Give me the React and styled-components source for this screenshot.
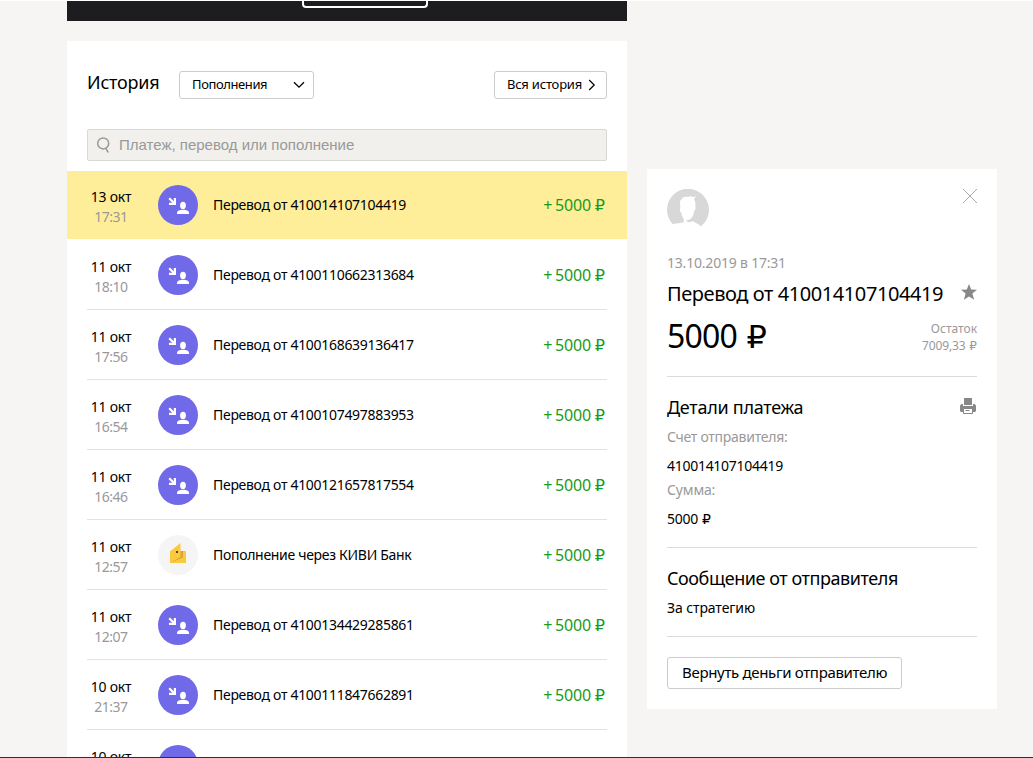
import React from 'react'
import styled, { createGlobalStyle } from 'styled-components'

//Styles
const GlobalStyle = createGlobalStyle`
  * {
    box-sizing: border-box;
  }
  body {
    margin: 0;
    background: #f6f5f3;
    color: #000;
    font-family: 'Noto Sans', 'Open Sans', sans-serif;
  }
  h1, h2, p {
    margin: 0;
    font-weight: 400;
  }
  svg {
    display: block;
    flex: none;
  }
`

const Page = styled.div`
  display: flex;
  flex-direction: column;
  height: 758px;
  overflow: hidden;
  border-top: 1px solid #fff;
  border-bottom: 1px solid #243240;
`

const Columns = styled.div`
  flex: 1;
  min-height: 0;
  display: flex;
  gap: 20px;
  padding-left: 67px;
`

const Main = styled.div`
  width: 560px;
`

const Banner = styled.div`
  display: flex;
  justify-content: center;
  height: 20px;
  margin-bottom: 20px;
  padding-left: 36px;
  background: #1d1d1f;
`

const BannerButton = styled.div`
  width: 126px;
  height: 7px;
  border: 2px solid #fff;
  border-top: 0;
  border-radius: 0 0 4px 4px;
`

const History = styled.section`
  height: 800px;
  padding-top: 30px;
  background: #fff;
`

const HistoryHeader = styled.div`
  display: flex;
  align-items: center;
  height: 28px;
  margin: 0 20px 30px;
`

const HistoryTitle = styled.h1`
  width: 92px;
  padding-bottom: 6px;
  font-size: 18px;
  line-height: 24px;
  letter-spacing: -0.2px;
  white-space: nowrap;
`

const Button = styled.button`
  display: flex;
  align-items: center;
  justify-content: space-between;
  width: ${props => props.$width}px;
  height: ${props => props.$height || 28}px;
  margin: 0;
  margin-left: ${props => (props.$right ? 'auto' : 0)};
  padding: 0 ${props => props.$end || 8}px 0 ${props => props.$start || 12}px;
  border: 1px solid #ccc;
  border-radius: 3px;
  background: #fff;
  color: #000;
  font-family: inherit;
  font-size: ${props => props.$size || 13}px;
  letter-spacing: ${props => props.$spacing || 0}px;
  white-space: nowrap;
`

const ButtonText = styled.span`
  padding-bottom: 2px;
`

const Search = styled.div`
  display: flex;
  align-items: center;
  height: 32px;
  margin: 0 20px 10px;
  padding: 0 0 1px 8px;
  gap: 7px;
  border: 1px solid #d9d8d4;
  border-radius: 2px;
  background: #f1f0ec;
  color: #999;
  font-family: 'Liberation Sans', Arial, sans-serif;
  font-size: 15px;
`

const Row = styled.div`
  display: flex;
  height: ${props => (props.$active ? 68 : 70)}px;
  margin: ${props => (props.$active ? '0 0 1px' : '0 20px')};
  padding: ${props => (props.$active ? '14px 20px 0' : '15px 0 0')};
  border-bottom: ${props => (props.$active ? 0 : '1px solid #e2e2e2')};
  background: ${props => (props.$active ? '#ffee99' : '#fff')};
`

const When = styled.div`
  width: 48px;
  margin: 2px 23px 0 0;
  font-size: 14px;
  line-height: 20px;
  letter-spacing: -0.2px;
  text-align: center;
`

const Time = styled.div`
  color: #999;
  letter-spacing: -0.5px;
`

const Name = styled.div`
  flex: 1;
  margin-left: 15px;
  font-size: 14px;
  line-height: 40px;
  letter-spacing: -0.3px;
`

const Amount = styled.div`
  margin-right: 2px;
  font-size: 16px;
  line-height: 40px;
  letter-spacing: -0.2px;
  word-spacing: -1px;
  color: #1a9a1a;
`

const Ruble = styled.span`
  margin-left: 0.06em;
  font-family: 'DejaVu Sans', sans-serif;
  font-size: 1em;
  line-height: 1;
  letter-spacing: 0;
`

const Details = styled.aside`
  width: 350px;
  height: 540px;
  margin-top: 168px;
  padding: 20px 20px 0;
  background: #fff;
`

const Line = styled.div`
  display: flex;
  justify-content: space-between;
  align-items: flex-start;
`

const Muted = styled.p`
  font-size: ${props => props.$size || 14}px;
  line-height: ${props => props.$line || 20}px;
  letter-spacing: ${props => props.$spacing || 0}px;
  text-align: ${props => props.$align || 'left'};
  color: #999;
`

const DateText = styled(Muted)`
  margin-top: 22px;
`

const Title = styled.h2`
  font-size: 20px;
  line-height: 30px;
  letter-spacing: -0.42px;
  margin-top: 6px;
  white-space: nowrap;
`

const Sum = styled.p`
  font-size: 32px;
  line-height: 40px;
  letter-spacing: -0.8px;
`

const Balance = styled.div`
  padding-top: 4px;
`

const SumLine = styled(Line)`
  height: 61px;
  margin-top: 7px;
  border-bottom: 1px solid #dcdcdc;
`

const Block = styled.div`
  height: ${props => props.$height}px;
  padding-top: 17px;
  border-bottom: 1px solid #dcdcdc;
`

const BlockTitle = styled.h2`
  height: 33px;
  font-size: 18px;
  line-height: 26px;
  letter-spacing: ${props => props.$spacing || -0.27}px;
`

const Value = styled.p`
  margin-top: ${props => props.$top || 0}px;
  font-size: 14px;
  line-height: 20px;
  letter-spacing: ${props => props.$spacing || -0.28}px;
`

const Footer = styled.div`
  padding-top: 20px;
`

const StarBox = styled.div`
  padding: 11px 0 0;
`

const PrinterBox = styled.div`
  padding: 4px 1px 0 0;
`

//Icons
const TransferIcon = () => (
  <svg width="40" height="40" viewBox="0 0 40 40">
    <circle cx="20" cy="20" r="20" fill="#7069e8" />
    <path d="M11.200 13.200l5 5" fill="none" stroke="#fff" strokeWidth="2.2" />
    <path d="M18 13v7h-7v-2.200h4.800v-4.800z" fill="#fff" />
    <ellipse cx="25" cy="20.400" rx="2.900" ry="3.700" fill="#fff" />
    <path d="M19 29v-1c0-2.200 2.600-3.300 6-3.300s6 1.100 6 3.300v1z" fill="#fff" />
  </svg>
)

const BankIcon = () => (
  <svg width="40" height="40" viewBox="0 0 40 40">
    <circle cx="20" cy="20" r="20" fill="#f5f5f5" />
    <path d="M12 28V16.500L22.500 8v8H28v12z" fill="#fbc93d" />
    <path d="M22.500 16H25v6.500L12 28l10.500-6z" fill="#d9a531" />
    <circle cx="19" cy="17" r="1.100" fill="#30240b" />
  </svg>
)

const SearchIcon = () => (
  <svg width="16" height="18" viewBox="0 0 16 18">
    <circle cx="7.2" cy="7.4" r="5.5" fill="none" stroke="#999" strokeWidth="1.5" />
    <path d="M9.600 12.200l2.700 4.300" fill="none" stroke="#999" strokeWidth="1.5" />
  </svg>
)

const DownIcon = () => (
  <svg width="12" height="8" viewBox="0 0 12 8">
    <path d="M1 1.2l5 5 5-5" fill="none" stroke="#000" strokeWidth="1.3" />
  </svg>
)

const RightIcon = () => (
  <svg width="8" height="12" viewBox="0 0 8 12">
    <path d="M1.2 1l5 5-5 5" fill="none" stroke="#000" strokeWidth="1.2" />
  </svg>
)

const Avatar = () => (
  <svg width="42" height="42" viewBox="0 0 42 42">
    <path
      d="M5.500 35A21 21 0 1 1 34 37.300c-3-2.800-6-3.300-8-5.300-2.500 1.500-5 1.500-7.500-.5l-1-.3c2 .5 4.500 0 6.500-1.700 2-2 2.800-4.500 3-7.500 1.500-.8 2-3 1.300-4.500.5-3-.2-5.500-1.300-7.200l2-3-4 1-1-1.500-2 1-5.500.2-2.500 3-1 1 .3 7c-1 1-.5 3.200 1 4.500.2 2.500 1 4.500 2.500 6.500l-.2 3.500z"
      fill="#d8d8d8"
    />
  </svg>
)

const CloseIcon = () => (
  <svg width="14" height="14" viewBox="0 0 14 14">
    <path d="M0 0l14 14M14 0L0 14" fill="none" stroke="#aaa" strokeWidth="1" />
  </svg>
)

const StarIcon = () => (
  <svg width="17" height="17" viewBox="0 0 17 17">
    <path d="M9 0l2.200 5.600 5.800.2-4.600 3.800 1.700 6.200L9 12.400l-5.100 3.400 1.700-6.200L1 5.800l5.800-.2z" fill="#888" />
  </svg>
)

const PrinterIcon = () => (
  <svg width="16" height="16" viewBox="0 0 16 16">
    <path d="M4 0h8v7H4zM1.500 6H3v2h10V6h1.500L16 7.500V13l-1 1h-2v-3H3v3H1l-1-1V7.500z" fill="#888" />
    <path d="M3.500 10.500h9v5h-9z" fill="#fff" stroke="#888" />
    <path d="M5.500 12.500h4" stroke="#888" />
  </svg>
)

const operations = [
  { date: '13 окт', time: '17:31', name: 'Перевод от 410014107104419', active: true },
  { date: '11 окт', time: '18:10', name: 'Перевод от 4100110662313684' },
  { date: '11 окт', time: '17:56', name: 'Перевод от 4100168639136417' },
  { date: '11 окт', time: '16:54', name: 'Перевод от 4100107497883953' },
  { date: '11 окт', time: '16:46', name: 'Перевод от 4100121657817554' },
  { date: '11 окт', time: '12:57', name: 'Пополнение через КИВИ Банк', bank: true },
  { date: '11 окт', time: '12:07', name: 'Перевод от 4100134429285861' },
  { date: '10 окт', time: '21:37', name: 'Перевод от 4100111847662891' },
  { date: '10 окт' }
]

const App = () => (
  <Page>
    <GlobalStyle />
    <Columns>
      <Main>
        <Banner>
          <BannerButton />
        </Banner>
        <History>
          <HistoryHeader>
            <HistoryTitle>История</HistoryTitle>
            <Button $width={135} $spacing={-0.4}>
              <ButtonText>Пополнения</ButtonText>
              <DownIcon />
            </Button>
            <Button $width={113} $right $end={10} $spacing={-0.2}>
              <ButtonText>Вся история</ButtonText>
              <RightIcon />
            </Button>
          </HistoryHeader>
          <Search>
            <SearchIcon />
            Платеж, перевод или пополнение
          </Search>
          {operations.map((item, index) => (
            <Row key={index} $active={item.active}>
              <When>
                {item.date}
                <Time>{item.time}</Time>
              </When>
              {item.bank ? <BankIcon /> : <TransferIcon />}
              <Name>{item.name}</Name>
              {item.name && (
                <Amount>
                  + 5000 <Ruble>₽</Ruble>
                </Amount>
              )}
            </Row>
          ))}
        </History>
      </Main>
      <Details>
        <Line>
          <Avatar />
          <CloseIcon />
        </Line>
        <DateText $spacing={-0.2}>13.10.2019 в 17:31</DateText>
        <Line>
          <Title>Перевод от 410014107104419</Title>
          <StarBox>
            <StarIcon />
          </StarBox>
        </Line>
        <SumLine>
          <Sum>
            5000 <Ruble>₽</Ruble>
          </Sum>
          <Balance>
            <Muted $size={12} $line={17} $align="right">
              Остаток
            </Muted>
            <Muted $size={12} $line={17} $align="right" $spacing={-0.1}>
              7009,33 <Ruble>₽</Ruble>
            </Muted>
          </Balance>
        </SumLine>
        <Block $height={171}>
          <Line>
            <BlockTitle>Детали платежа</BlockTitle>
            <PrinterBox>
              <PrinterIcon />
            </PrinterBox>
          </Line>
          <Muted $spacing={-0.25}>Счет отправителя:</Muted>
          <Value $top={9}>410014107104419</Value>
          <Muted $line={28} $spacing={-0.15}>
            Сумма:
          </Muted>
          <Value $top={5}>
            5000 <Ruble>₽</Ruble>
          </Value>
        </Block>
        <Block $height={89}>
          <BlockTitle $spacing={-0.43}>Сообщение от отправителя</BlockTitle>
          <Value $spacing={-0.1}>За стратегию</Value>
        </Block>
        <Footer>
          <Button $width={235} $height={32} $size={15} $start={14} $spacing={-0.32}>
            <ButtonText>Вернуть деньги отправителю</ButtonText>
          </Button>
        </Footer>
      </Details>
    </Columns>
  </Page>
)

export default App
